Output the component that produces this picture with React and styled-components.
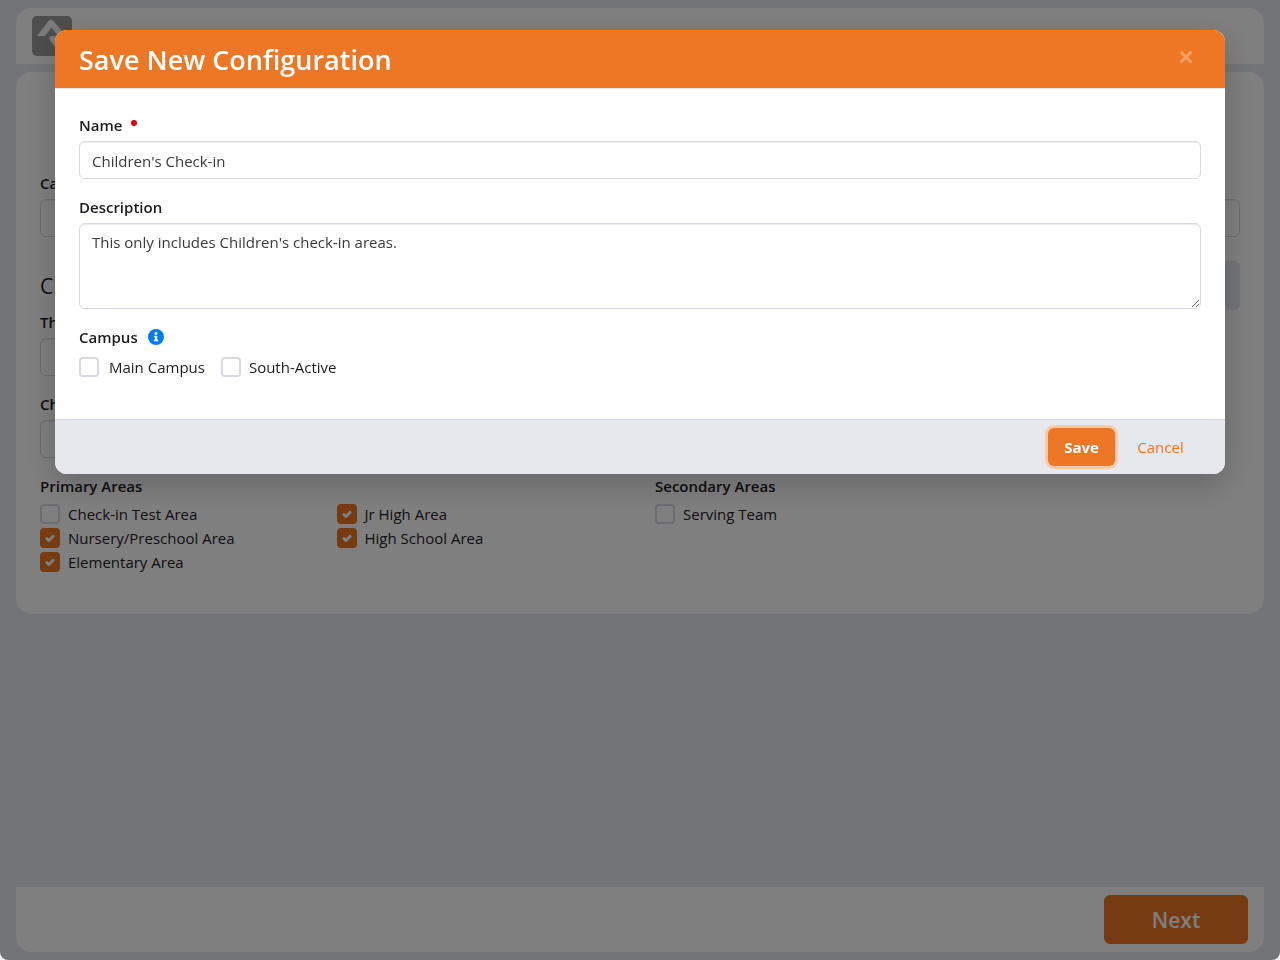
import React from 'react'
import styled, { createGlobalStyle } from 'styled-components'

const App = () => {
  return (
    <>
      <GlobalStyle />
      <Page>
        <TopBar>
          <Logo viewBox="0 0 40 40" aria-label="Logo">
            <rect width="40" height="40" rx="5" fill="#9d9d9d" />
            <path d="M5 20 L16.500 5 Q19 2.500 21.500 5 L34 20 H26 L19.500 11.500 L13 20 Z" fill="#f6f6f6" />
            <path d="M20 20 H26 L34 30 V40 H30 L17.800 24 Q16 20 20 20 Z" fill="#f6f6f6" />
          </Logo>
        </TopBar>

        <Card>
          <CardTitle>Check-in</CardTitle>
          <Field>
            <Label htmlFor="camera">Camera</Label>
            <TextInput id="camera" />
          </Field>
          <SectionRow>
            <SectionTitle>Check-in Configuration</SectionTitle>
            <GrayButton aria-label="Save configuration" />
          </SectionRow>
          <Columns>
            <div>
              <Field>
                <Label htmlFor="theme">Theme</Label>
                <TextInput id="theme" />
              </Field>
              <Field>
                <Label htmlFor="type">Check-in Type</Label>
                <TextInput id="type" />
              </Field>
            </div>
          </Columns>
          <Columns>
            <Group>
              <Legend>Primary Areas</Legend>
              <CheckColumns>
                <Check label="Check-in Test Area" />
                <Check label="Nursery/Preschool Area" checked />
                <Check label="Elementary Area" checked />
                <Check label="Jr High Area" checked />
                <Check label="High School Area" checked />
              </CheckColumns>
            </Group>
            <Group>
              <Legend>Secondary Areas</Legend>
              <Check label="Serving Team" />
            </Group>
          </Columns>
        </Card>

        <BottomBar>
          <NextButton>Next</NextButton>
        </BottomBar>
      </Page>

      <Overlay>
        <Modal role="dialog" aria-labelledby="modal-title">
          <ModalHeader>
            <ModalTitle id="modal-title">Save New Configuration</ModalTitle>
            <CloseButton aria-label="Close">
              <svg width="14" height="14" viewBox="0 0 14 14">
                <path d="M2.500 2.500 L11.500 11.500 M11.500 2.500 L2.500 11.500" stroke="currentColor" strokeWidth="3" strokeLinecap="round" />
              </svg>
            </CloseButton>
          </ModalHeader>
          <ModalBody>
            <Field>
              <Label htmlFor="name">
                Name
                <Required />
              </Label>
              <TextInput id="name" defaultValue="Children's Check-in" />
            </Field>
            <Field>
              <Label htmlFor="description">Description</Label>
              <TextArea id="description" defaultValue="This only includes Children's check-in areas." />
            </Field>
            <Group>
              <Legend>
                Campus
                <InfoIcon viewBox="0 0 16 16" aria-hidden="true">
                  <circle cx="8" cy="8" r="8" fill="#007bff" />
                  <circle cx="8" cy="4.400" r="1.400" fill="#fff" />
                  <path d="M6 6.700 H9.200 V10.800 H10.200 V12.300 H5.900 V10.800 H6.900 V8.200 H6 Z" fill="#fff" />
                </InfoIcon>
              </Legend>
              <InlineChecks>
                <Check label="Main Campus" wide />
                <Check label="South-Active" />
              </InlineChecks>
            </Group>
          </ModalBody>
          <ModalFooter>
            <SaveButton>Save</SaveButton>
            <CancelButton>Cancel</CancelButton>
          </ModalFooter>
        </Modal>
      </Overlay>
    </>
  )
}

const Check = ({ label, checked, wide }) => (
  <CheckLabel $wide={wide}>
    <CheckBox defaultChecked={checked} />
    {label}
  </CheckLabel>
)

export default App


const GlobalStyle = createGlobalStyle`
*{
    box-sizing:border-box;
}
body{
    margin:0;
    background:#fff;
    color:#1c1c1e;
    font-family:"Segoe UI","Open Sans","Noto Sans",sans-serif;
    font-size:15px;
    line-height:24px;
}
button,input,textarea{
    font:inherit;
    color:inherit;
}
`

const Page=styled.div`
display:flex;
flex-direction:column;
min-height:100vh;
padding:8px 16px;
background:#e7e9ef;
border-radius:0 0 8px 8px;
`

const TopBar=styled.header`
height:56px;
padding:8px 16px;
margin-bottom:8px;
background:#fff;
border-radius:16px 16px 0 0;
`

const Logo=styled.svg`
display:block;
width:40px;
height:40px;
`

const Card=styled.main`
padding:24px;
background:#fff;
border-radius:16px;
`

const CardTitle=styled.h1`
margin:0 0 35px;
font-size:27px;
font-weight:600;
line-height:40px;
text-align:center;
`

const Field=styled.div`
margin-bottom:16px;
`

const Label=styled.label`
display:flex;
align-items:center;
margin-bottom:4px;
font-weight:600;
`

const TextInput=styled.input.attrs({type:'text'})`
display:block;
width:100%;
height:38px;
padding:7px 12px 5px;
border:1px solid #d9d9e3;
border-radius:6px;
background:#fff;
box-shadow:inset 0 1px 1px rgba(0,0,0,0.075);
outline:none;
color:#3a3a3c;
`

const TextArea=styled.textarea`
display:block;
width:100%;
height:86px;
padding:6px 12px;
border:1px solid #d9d9e3;
border-radius:6px;
background:#fff;
box-shadow:inset 0 1px 1px rgba(0,0,0,0.075);
outline:none;
resize:vertical;
color:#3a3a3c;
`

const SectionRow=styled.div`
display:flex;
align-items:center;
justify-content:space-between;
padding-top:8px;
`

const SectionTitle=styled.h2`
margin:0;
font-size:21px;
font-weight:400;
`

const GrayButton=styled.button`
width:144px;
height:49px;
border:0;
border-radius:6px;
background:#e7e9ef;
`

const Columns=styled.div`
display:grid;
grid-template-columns:1fr 1fr;
gap:30px;
`

const Group=styled.fieldset`
min-width:0;
margin:0 0 16px;
padding:0;
border:0;
`

const Legend=styled.legend`
display:flex;
align-items:center;
margin-bottom:4px;
padding:0;
font-weight:600;
`

const CheckColumns=styled.div`
columns:2;
column-gap:8px;
`

const InlineChecks=styled.div`
display:flex;
gap:16px;
padding-top:2px;
`

const CheckLabel=styled.label`
display:flex;
align-items:center;
gap:${(props) => (props.$wide ? '10px' : '8px')};
break-inside:avoid;
`

const CheckBox=styled.input.attrs({type:'checkbox'})`
appearance:none;
flex:none;
width:20px;
height:20px;
margin:0;
border:2px solid #d9d9e3;
border-radius:4px;
background:#fff;

&:checked{
    border-color:#ee7725;
    background:#ee7725 url("data:image/svg+xml,%3Csvg xmlns='http://www.w3.org/2000/svg' viewBox='0 0 16 16'%3E%3Cpath d='M4 7.800l2.800 2.800 5.200-5.200' fill='none' stroke='%23fff' stroke-width='2.800'/%3E%3C/svg%3E") center / 16px no-repeat;
}
`

const Required=styled.span`
width:6px;
height:6px;
margin:0 0 4px 9px;
border-radius:50%;
background:#d90016;
`

const InfoIcon=styled.svg`
width:16px;
height:16px;
margin-left:10px;
`

const BottomBar=styled.footer`
display:flex;
justify-content:flex-end;
margin-top:auto;
padding:8px 16px;
background:#fff;
border-radius:0 0 16px 16px;
`

const NextButton=styled.button`
width:144px;
height:49px;
border:0;
border-radius:6px;
background:#ee7725;
color:#fff;
font-size:21px;
font-weight:600;
cursor:pointer;
`

const Overlay=styled.div`
position:fixed;
inset:0;
padding:30px 55px;
background:rgba(0,0,0,0.5);
border-radius:0 0 8px 8px;
`

const Modal=styled.section`
overflow:hidden;
background:#fff;
border-radius:12px;
box-shadow:0 10px 30px rgba(0,0,0,0.2);
`

const ModalHeader=styled.header`
display:flex;
align-items:center;
justify-content:space-between;
height:59px;
padding:2px 32px 0 24px;
border-bottom:1px solid #e7e7ed;
background:#ee7725;
color:#fff;
`

const ModalTitle=styled.h2`
margin:0;
font-size:27px;
font-weight:600;
line-height:32px;
`

const CloseButton=styled.button`
display:flex;
margin-bottom:6px;
padding:0;
border:0;
background:none;
color:#f4a066;
cursor:pointer;
`

const ModalBody=styled.div`
padding:24px;
`

const ModalFooter=styled.footer`
display:flex;
justify-content:flex-end;
gap:5px;
padding:8px 24px;
border-top:1px solid #d9d9e3;
background:#e7e8ed;
`

const SaveButton=styled.button`
height:38px;
width:67px;
padding:0;
border:0;
border-radius:6px;
background:#ee7725;
box-shadow:0 0 0 3px #fbcba8;
color:#fff;
font-weight:700;
cursor:pointer;
`

const CancelButton=styled.button`
width:81px;
height:38px;
padding:0;
border:0;
background:none;
color:#ee7725;
cursor:pointer;
`
